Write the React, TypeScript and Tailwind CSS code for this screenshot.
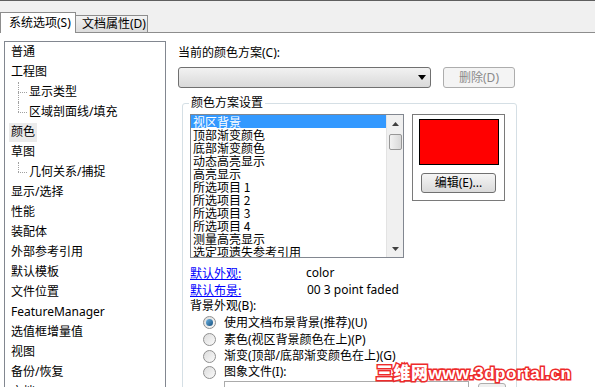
import React from 'react';

const treeItems: { label: string; child?: boolean; last?: boolean; selected?: boolean }[] = [
  { label: '普通' },
  { label: '工程图' },
  { label: '显示类型', child: true },
  { label: '区域剖面线/填充', child: true, last: true },
  { label: '颜色', selected: true },
  { label: '草图' },
  { label: '几何关系/捕捉', child: true, last: true },
  { label: '显示/选择' },
  { label: '性能' },
  { label: '装配体' },
  { label: '外部参考引用' },
  { label: '默认模板' },
  { label: '文件位置' },
  { label: 'FeatureManager' },
  { label: '选值框增量值' },
  { label: '视图' },
  { label: '备份/恢复' },
  { label: '文档' },
];

const schemeItems = [
  '视区背景',
  '顶部渐变颜色',
  '底部渐变颜色',
  '动态高亮显示',
  '高亮显示',
  '所选项目 1',
  '所选项目 2',
  '所选项目 3',
  '所选项目 4',
  '测量高亮显示',
  '选定项遗失参考引用',
];

const radios = [
  { label: '使用文档布景背景(推荐)(U)', checked: true },
  { label: '素色(视区背景颜色在上)(P)' },
  { label: '渐变(顶部/底部渐变颜色在上)(G)' },
  { label: '图象文件(I):' },
];

const Radio = ({ checked }: { checked?: boolean }) => (
  <span className="w-[13px] h-[13px] rounded-full border border-[#8f8f8f] bg-gradient-to-br from-[#dcdcdc] to-[#fafafa] flex items-center justify-center shrink-0">
    {checked && <span className="w-[7px] h-[7px] rounded-full bg-gradient-to-br from-[#6fb6e6] to-[#14507e]" />}
  </span>
);

export default function App() {
  return (
    <div className="relative w-[595px] h-[387px] overflow-hidden bg-white text-black font-['Noto_Sans','Noto_Sans_CJK_SC',sans-serif] text-[12px]">
      {/* tab strip */}
      <div className="h-[33px] bg-[#f0f0f0] border-t border-b border-[#5f5f5f] border-b-[#8d8d8d] flex items-end">
        <div className="h-[21px] w-[76px] -mb-px bg-white border border-b-0 border-[#8d8d8d] flex items-center pl-[8px] text-[12px] leading-none">
          系统选项(S)
        </div>
        <div className="h-[17px] w-[72px] bg-gradient-to-b from-[#f3f3f3] to-[#dcdcdc] border-t border-r border-[#8d8d8d] flex items-center pl-[6px] text-[12px] leading-none">
          文档属性(D)
        </div>
      </div>

      <div className="flex">
        {/* tree */}
        <div className="ml-[4px] mt-[8px] w-[162px] h-[400px] border border-[#828790] shrink-0">
          {treeItems.map((it, i) => (
            <div key={i} className="h-[20px] flex items-center">
              {it.child ? (
                <>
                  <span className="relative self-stretch w-[10px] ml-[13px]">
                    <span
                      className={`absolute left-0 top-0 w-0 border-l border-dotted border-[#a0a0a0] ${it.last ? 'h-[10px]' : 'h-[20px]'}`}
                    />
                    <span className="absolute left-0 top-[10px] w-[9px] border-t border-dotted border-[#a0a0a0]" />
                  </span>
                  <span className="ml-[1px]">{it.label}</span>
                </>
              ) : (
                <span
                  className={`ml-[4px] px-[2px] h-[19px] flex items-center ${it.selected ? 'bg-[#ebebeb]' : ''}`}
                >
                  {it.label}
                </span>
              )}
            </div>
          ))}
        </div>

        {/* right side */}
        <div className="ml-[12px] pt-[12px] flex flex-col">
          <div className="h-[16px] leading-[16px]">当前的颜色方案(C):</div>
          <div className="mt-[6px] flex items-center">
            <div className="w-[253px] h-[21px] rounded-[3px] border border-[#707070] bg-gradient-to-b from-[#f2f2f2] to-[#d9d9d9] flex items-center justify-end pr-[4px]">
              <svg width="8" height="5" viewBox="0 0 8 5">
                <path d="M0 0h8L4 5z" fill="#000" />
              </svg>
            </div>
            <div className="ml-[12px] w-[72px] h-[21px] rounded-[3px] border border-[#adadad] bg-[#f4f4f4] flex items-center justify-center text-[#8a8a8a]">
              删除(D)
            </div>
          </div>

          {/* group box */}
          <div className="relative mt-[15px] ml-[4px] w-[335px] h-[320px] border border-[#d5dfe5] rounded-[3px] pt-[10px] pl-[7px]">
            <span className="absolute -top-[9px] left-[6px] bg-white px-[2px] leading-[16px]">颜色方案设置</span>
            <div className="flex">
              {/* list */}
              <div className="w-[214px] h-[144px] border border-[#828790] flex overflow-hidden">
                <div className="flex-1 font-['Noto_Sans_CJK_SC',sans-serif] text-[12px] leading-[13px] overflow-hidden">
                  {schemeItems.map((s, i) => (
                    <div key={i} className={`h-[13px] pl-[2px] whitespace-nowrap ${i === 0 ? 'bg-[#3399ff] text-white' : ''}`}>
                      {s}
                    </div>
                  ))}
                </div>
                <div className="w-[17px] bg-[#f0f0f0] border-l border-[#e3e3e3] flex flex-col items-center">
                  <div className="h-[17px] flex items-center justify-center">
                    <svg width="7" height="4" viewBox="0 0 7 4">
                      <path d="M3.5 0L7 4H0z" fill="#404040" />
                    </svg>
                  </div>
                  <div className="mt-[2px] w-[13px] h-[16px] rounded-[2px] border border-[#979797] bg-gradient-to-r from-[#f2f2f2] to-[#d8d8d8]" />
                  <div className="flex-1" />
                  <div className="h-[17px] flex items-center justify-center">
                    <svg width="7" height="4" viewBox="0 0 7 4">
                      <path d="M0 0h7L3.5 4z" fill="#404040" />
                    </svg>
                  </div>
                </div>
              </div>

              {/* colour preview */}
              <div className="ml-[8px] w-[93px] h-[87px] border border-[#7a7a7a] flex flex-col items-center pt-[4px]">
                <div className="w-[80px] h-[46px] bg-[#ff0000] border border-black" />
                <div className="mt-[8px] w-[75px] h-[20px] rounded-[3px] border border-[#707070] bg-gradient-to-b from-[#f5f5f5] to-[#dadada] flex items-center justify-center">
                  编辑(E)...
                </div>
              </div>
            </div>

            <div className="mt-[7px] flex flex-col">
              <div className="h-[16px] flex items-center">
                <span className="w-[116px] text-[#0000ff] underline font-['Noto_Sans_CJK_SC',sans-serif]">默认外观:</span>
                <span>color</span>
              </div>
              <div className="mt-[1px] h-[16px] flex items-center">
                <span className="w-[117px] text-[#0000ff] underline font-['Noto_Sans_CJK_SC',sans-serif]">默认布景:</span>
                <span>00 3 point faded</span>
              </div>
              <div className="h-[16px] flex items-center">背景外观(B):</div>
              {radios.map((r, i) => (
                <div key={i} className={`${i < 2 ? 'h-[17px]' : 'h-[16px]'} flex items-center pl-[13px] gap-[8px]`}>
                  <Radio checked={r.checked} />
                  <span className="whitespace-nowrap">{r.label}</span>
                </div>
              ))}
              <div className="mt-[1px] flex items-start">
                <div className="ml-[34px] w-[245px] h-[22px] border border-[#ababab]" />
                <div className="mt-[2px] ml-[9px] w-[28px] h-[22px] rounded-[3px] border border-[#adadad] bg-[#f0f0f0]" />
              </div>
            </div>
          </div>
        </div>
      </div>

      {/* watermark */}
      <div className="absolute left-[376px] top-[363px] flex items-baseline font-['Liberation_Sans',sans-serif] font-bold text-[17px] leading-none text-white [-webkit-text-stroke:3px_#ee2a2a] [paint-order:stroke_fill] tracking-[0.5px] pointer-events-none">
        <span className="font-['Noto_Sans_CJK_SC',sans-serif] font-black text-[17px]">三维网</span>
        <span>www.3dportal.cn</span>
      </div>
    </div>
  );
}
